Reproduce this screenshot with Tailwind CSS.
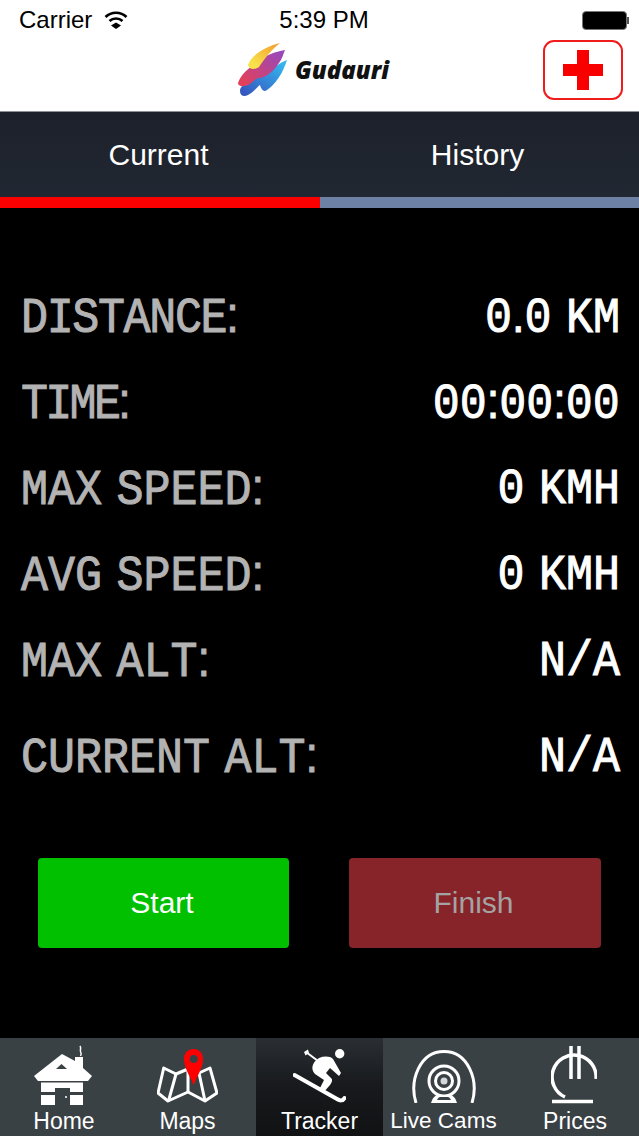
<!DOCTYPE html>
<html lang="en">
  <head>
    <meta charset="UTF-8" />
    <title>Gudauri Tracker</title>
    <meta name="viewport" content="width=device-width, initial-scale=1.0" />
    <script src="https://cdn.jsdelivr.net/npm/@tailwindcss/browser@4"></script>
  </head>
  <body class="h-[1136px] w-[639px] overflow-hidden bg-black font-['Liberation_Sans',Arial,sans-serif]">
    <div class="flex h-[1136px] flex-col">
      <!-- Status bar + logo -->
      <header class="h-[112px] shrink-0 border-b border-[#8d9196] bg-white text-black">
        <div class="flex h-[40px] items-center justify-between pl-[19px] pr-[10px] text-[24px]">
          <div class="flex w-[200px] items-center gap-[12px]">
            <span>Carrier</span>
            <svg width="24" height="18" viewBox="0 0 24 18" fill="none" stroke="#000" stroke-width="2.6">
              <path d="M1.5 6a15 15 0 0 1 21 0" />
              <path d="M5.5 10a9.5 9.5 0 0 1 13 0" />
              <path d="M7 14.5L12 18L17 14.5L12 11.500Z" fill="#000" stroke="none" />
            </svg>
          </div>
          <span>5:39 PM</span>
          <div class="flex w-[200px] items-center justify-end">
            <div class="h-[19px] w-[45px] rounded-[4px] border border-[#777] bg-black"></div>
            <div class="h-[7px] w-[2px] bg-[#555]"></div>
          </div>
        </div>
        <div class="relative flex h-[71px] items-start justify-center">
          <div class="-ml-[13px] flex items-center gap-[8px] pt-[3px]">
            <svg width="50" height="54" viewBox="0 0 50 54">
              <defs>
                <linearGradient id="logo-y" x1="0" y1="1" x2="1" y2="0">
                  <stop offset="0.2" stop-color="#f8e14a" />
                  <stop offset="1" stop-color="#f09a30" />
                </linearGradient>
                <linearGradient id="logo-p" x1="0" y1="1" x2="1" y2="0">
                  <stop offset="0.1" stop-color="#e2405a" />
                  <stop offset="0.9" stop-color="#9a48b8" />
                </linearGradient>
                <linearGradient id="logo-b" x1="0" y1="1" x2="1" y2="0">
                  <stop offset="0.1" stop-color="#3559c0" />
                  <stop offset="0.9" stop-color="#35b5ee" />
                </linearGradient>
              </defs>
              <path d="M50 17C44 19 38 24 33 27C28 30 22 32 18 36L13 38C8 41 3 43 3 48C3 53 7 54 11 52C17 49 20 44 23 42C24 45 26 50 30 47C38 42 46 30 50 17Z" fill="url(#logo-b)" />
              <path d="M48 7C38 9 28 12 20 19C12 25 4 31 1 40C1 44 8 44 13 41C17 38 19 35 22 35C30 35 38 26 42 20C45 16 46 12 48 7Z" fill="url(#logo-p)" />
              <path d="M43 0C30 3 15 11 11 22C12 27 18 27 22 24C27 17 32 9 43 0Z" fill="url(#logo-y)" />
            </svg>
            <span class="text-[24px] font-extrabold italic leading-none text-[#111] font-['Open_Sans',sans-serif]">Gudauri</span>
          </div>
          <div class="absolute right-[16px] top-0 flex h-[60px] w-[80px] items-center justify-center rounded-[11px] border-2 border-[#f01c1c] bg-white">
            <svg width="40" height="40" viewBox="0 0 40 40">
              <path d="M14 0H26V14H40V26H26V40H14V26H0V14H14Z" fill="#f90000" />
            </svg>
          </div>
        </div>
      </header>

      <!-- Segmented tabs -->
      <nav class="shrink-0 bg-gradient-to-b from-[#1c212b] to-[#222833]">
        <div class="flex h-[85px] items-center text-[30px] text-white">
          <div class="w-[319px] pr-[2px] text-center">Current</div>
          <div class="flex-1 pr-[3px] text-center">History</div>
        </div>
        <div class="flex h-[11px]">
          <div class="w-[320px] bg-[#fb0000]"></div>
          <div class="flex-1 bg-[#6c81a3]"></div>
        </div>
      </nav>

      <!-- Readings -->
      <main class="flex-1 bg-black pl-[21px] pr-[19px] pt-[66px] font-['Liberation_Mono',monospace] text-[50px]">
        <div class="flex h-[86px] items-center justify-between">
          <span class="inline-block origin-left scale-x-[.9] tracking-[-1.5px] text-[#b3b3b3] [-webkit-text-stroke:1px_#b3b3b3] [word-spacing:-14px]">DISTANCE<span class="font-['Liberation_Sans']">:</span></span>
          <span class="inline-block origin-right scale-x-[.9] text-white [-webkit-text-stroke:1px_#fff] [word-spacing:-14px]">0<span class="font-['Liberation_Sans']">.</span>0 KM</span>
        </div>
        <div class="flex h-[86px] items-center justify-between">
          <span class="inline-block origin-left scale-x-[.9] tracking-[-3px] text-[#b3b3b3] [-webkit-text-stroke:1px_#b3b3b3]">TIME<span class="font-['Liberation_Sans']">:</span></span>
          <span class="inline-block origin-right scale-x-[.9] text-white [-webkit-text-stroke:1px_#fff]">00<span class="font-['Liberation_Sans']">:</span>00<span class="font-['Liberation_Sans']">:</span>00</span>
        </div>
        <div class="flex h-[86px] items-center justify-between">
          <span class="inline-block origin-left scale-x-[.9] text-[#b3b3b3] [-webkit-text-stroke:1px_#b3b3b3] [word-spacing:-14px]">MAX SPEED<span class="font-['Liberation_Sans']">:</span></span>
          <span class="inline-block origin-right scale-x-[.9] text-white [-webkit-text-stroke:1px_#fff] [word-spacing:-14px]">0 KMH</span>
        </div>
        <div class="flex h-[86px] items-center justify-between">
          <span class="inline-block origin-left scale-x-[.9] text-[#b3b3b3] [-webkit-text-stroke:1px_#b3b3b3] [word-spacing:-14px]">AVG SPEED<span class="font-['Liberation_Sans']">:</span></span>
          <span class="inline-block origin-right scale-x-[.9] text-white [-webkit-text-stroke:1px_#fff] [word-spacing:-14px]">0 KMH</span>
        </div>
        <div class="flex h-[86px] items-center justify-between">
          <span class="inline-block origin-left scale-x-[.9] text-[#b3b3b3] [-webkit-text-stroke:1px_#b3b3b3] [word-spacing:-14px]">MAX ALT<span class="font-['Liberation_Sans']">:</span></span>
          <span class="inline-block origin-right scale-x-[.9] text-white [-webkit-text-stroke:1px_#fff]">N/A</span>
        </div>
        <div class="mt-[10px] flex h-[86px] items-center justify-between">
          <span class="inline-block origin-left scale-x-[.9] text-[#b3b3b3] [-webkit-text-stroke:1px_#b3b3b3] [word-spacing:-14px]">CURRENT ALT<span class="font-['Liberation_Sans']">:</span></span>
          <span class="inline-block origin-right scale-x-[.9] text-white [-webkit-text-stroke:1px_#fff]">N/A</span>
        </div>

        <div class="ml-[17px] mt-[58px] flex w-[563px] justify-between font-['Liberation_Sans',Arial,sans-serif] text-[30px]">
          <div class="flex h-[90px] w-[251px] items-center justify-center rounded-[4px] bg-[#00c000] pb-[2px] pr-[3px] text-white">Start</div>
          <div class="flex h-[90px] w-[252px] items-center justify-center rounded-[4px] bg-[#86242a] pb-[2px] pr-[3px] text-[#a3a3a3]">Finish</div>
        </div>
      </main>

      <!-- Tab bar -->
      <footer class="flex h-[98px] shrink-0 bg-[#3a4145] text-[23px] leading-none text-white">
        <div class="flex w-[128px] flex-col items-center">
          <div class="h-[72px] pt-[7px] pr-[2px]">
            <svg width="58" height="61" viewBox="0 0 58 61" fill="#fff">
              <path d="M46 1C48 4 45 5 47 8C47.500 9 47 10 46.500 11" fill="none" stroke="#fff" stroke-width="1.500" />
              <path d="M28 9L41 16V12H49V23L58 31L54 36H4L0 31Z" />
              <path d="M22 24H33L27.500 19Z" fill="#3a4145" />
              <path d="M7 37.500H49V47H36V43H21V47H7Z" />
              <path d="M7 50H21V60H7ZM36 50H49V60H36Z" />
              <circle cx="32" cy="52" r="1" />
            </svg>
          </div>
          <span>Home</span>
        </div>
        <div class="flex w-[128px] flex-col items-center pr-[9px]">
          <div class="h-[72px] pt-[11px]">
            <svg width="61" height="54" viewBox="0 0 61 54" fill="none">
              <path d="M6.700 19L19 25L31 20L42 24L53 19L60 44L48 52L31 43L11 52L1 44Z" stroke="#fff" stroke-width="3" stroke-linejoin="round" />
              <path d="M19 25L11.500 52M31 20V43M42 24L48 52" stroke="#fff" stroke-width="3" />
              <path d="M36.700 36C33 27 27 19 27 10C27 4 31 0 36.700 0C42 0 46 4 46 10C46 19 40 27 36.700 36Z" fill="#f00" />
              <circle cx="36.700" cy="10" r="4" fill="#3a4145" />
            </svg>
          </div>
          <span>Maps</span>
        </div>
        <div class="flex w-[127px] flex-col items-center bg-gradient-to-b from-[#2a2f33] via-[#17191c] to-[#101214]">
          <div class="h-[72px] pt-[11px] pr-[1px]">
            <svg width="53" height="54" viewBox="0 0 53 54" fill="#fff">
              <circle cx="46.700" cy="4.700" r="4.700" />
              <path d="M13 3L29 15" stroke="#fff" stroke-width="2" />
              <path d="M11 3L15 0.500L16 4L12.500 6.500Z" />
              <path d="M26 9C31 7 37 7 40 10L48 24L46 27L37 19L33 24L38 29C40 31 39 33 37 36L30 44L26 41L31 31L22 25C18 21 18 14 26 9Z" />
              <path d="M1.500 26L44 50C47 52 50 52 51.500 49" fill="none" stroke="#fff" stroke-width="4" stroke-linecap="round" />
            </svg>
          </div>
          <span>Tracker</span>
        </div>
        <div class="flex w-[128px] flex-col items-center pr-[7px]">
          <div class="h-[72px] pt-[12px]">
            <svg width="64" height="53" viewBox="0 0 64 53" fill="none" stroke="#fff">
              <path d="M4 53C-3 30 8 1.500 32 1.500S67 30 60 53" stroke-width="3" />
              <circle cx="32" cy="31" r="15" stroke-width="3" />
              <circle cx="32" cy="31" r="8.500" stroke-width="3" />
              <circle cx="32" cy="31" r="3.500" fill="#d5d8da" stroke="none" />
              <path d="M19 53C21 47 23 46 25 45H39C41 46 43 47 45 53Z" fill="#fff" stroke="none" />
              <path d="M25 50C26 48 27 47 28 47H36C37 47 38 48 39 50Z" fill="#3a4145" stroke="none" />
            </svg>
          </div>
          <span class="text-[22.500px]">Live Cams</span>
        </div>
        <div class="flex w-[128px] flex-col items-center">
          <div class="h-[72px] pt-[8px] pr-[3px]">
            <svg width="46" height="58" viewBox="0 0 46 58" fill="none" stroke="#fff" stroke-width="3.500">
              <path d="M45 33A22 22 0 1 0 14 51" />
              <path d="M20 0V33M28 0V33" />
              <path d="M1 55.500H42" />
            </svg>
          </div>
          <span>Prices</span>
        </div>
      </footer>
    </div>
  </body>
</html>
